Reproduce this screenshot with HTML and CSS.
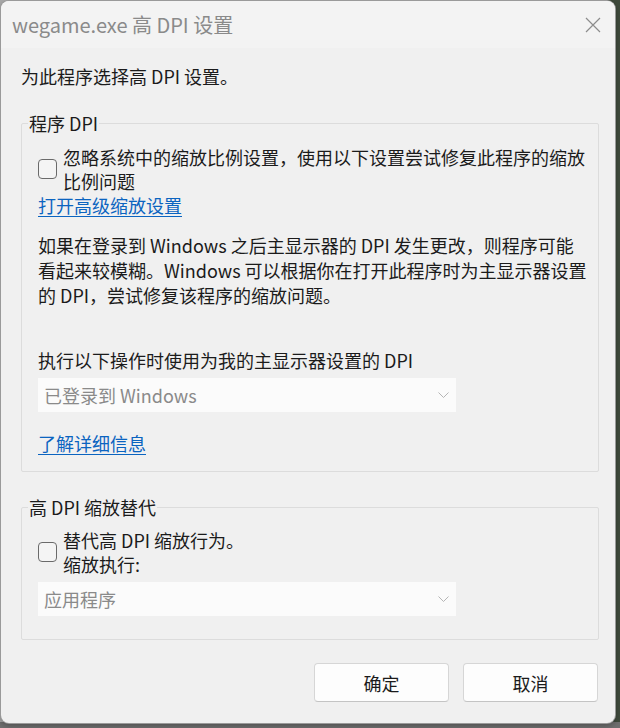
FILE: index.html
```html
<!DOCTYPE html>
<html lang="zh-CN">
<head>
<meta charset="utf-8">
<title>wegame.exe 高 DPI 设置</title>
<link rel="stylesheet" href="styles.css">
</head>
<body>
<div class="window">
  <div class="titlebar">
    <span class="title">wegame.exe 高 DPI 设置</span>
    <svg class="close" width="16" height="16" viewBox="0 0 16 16"><path d="M1 1L15 15M15 1L1 15" stroke="#8c8c8c" stroke-width="1.2" fill="none"/></svg>
  </div>
  <div class="content">
    <p class="intro">为此程序选择高 DPI 设置。</p>
    <fieldset class="group group-dpi">
      <legend>程序 DPI</legend>
      <div class="check-row">
        <span class="checkbox"></span>
        <span class="check-label">忽略系统中的缩放比例设置，使用以下设置尝试修复此程序的缩放<br>比例问题</span>
      </div>
      <a class="link">打开高级缩放设置</a>
      <p class="desc">如果在登录到 Windows 之后主显示器的 DPI 发生更改，则程序可能<br>看起来较模糊。Windows 可以根据你在打开此程序时为主显示器设置<br>的 DPI，尝试修复该程序的缩放问题。</p>
      <p class="label">执行以下操作时使用为我的主显示器设置的 DPI</p>
      <div class="select">
        <span>已登录到 Windows</span>
        <svg class="chev" width="11" height="6" viewBox="0 0 11 6"><path d="M0.5 0.5L5.5 5.5L10.5 0.5" stroke="#b5b5b5" stroke-width="1" fill="none"/></svg>
      </div>
      <a class="link link-more">了解详细信息</a>
    </fieldset>
    <fieldset class="group group-override">
      <legend>高 DPI 缩放替代</legend>
      <div class="check-row">
        <span class="checkbox"></span>
        <span class="check-label">替代高 DPI 缩放行为。<br>缩放执行:</span>
      </div>
      <div class="select">
        <span>应用程序</span>
        <svg class="chev" width="11" height="6" viewBox="0 0 11 6"><path d="M0.5 0.5L5.5 5.5L10.5 0.5" stroke="#b5b5b5" stroke-width="1" fill="none"/></svg>
      </div>
    </fieldset>
    <div class="buttons">
      <button class="btn">确定</button>
      <button class="btn">取消</button>
    </div>
  </div>
</div>
</body>
</html>
```
FILE: styles.css
```css
html, body {
  margin: 0;
  padding: 0;
}
body {
  width: 620px;
  height: 728px;
  overflow: hidden;
  background:
    linear-gradient(0deg, #6f6f6f 0, #6f6f6f 6px, transparent 6px),
    linear-gradient(90deg, #a9a9a9 0, #a9a9a9 600px, #3f4a3c 600px);
  font-family: "Noto Sans CJK SC", "Noto Sans", sans-serif;
  font-size: 18px;
  color: #1b1b1b;
}
.window {
  margin: 1px 0 0 1px;
  width: 614px;
  height: 722px;
  background: #f0f0f0;
  border-radius: 8px;
  box-shadow: 0 0 0 1px #9a9a9a, 0 2px 6px rgba(0,0,0,0.35);
  display: flex;
  flex-direction: column;
  overflow: hidden;
}
.titlebar {
  height: 47px;
  flex: none;
  display: flex;
  align-items: center;
  justify-content: space-between;
  padding: 0 14px 0 11px;
  background: #f3f3f3;
}
.title {
  color: #8a8a8a;
  font-size: 20px;
  line-height: 24px;
  white-space: nowrap;
}
.close {
  display: block;
}
.content {
  padding: 0 16px 0 20px;
  display: flex;
  flex-direction: column;
}
.intro {
  margin: 16px 0 0;
  line-height: 24px;
}
.group {
  margin: 23px 0 0;
  border: 1px solid #dcdcdc;
  border-radius: 2px;
  padding: 0 16px 16px 16px;
  min-width: 0;
  display: flex;
  flex-direction: column;
  align-items: flex-start;
}
.group legend {
  padding: 0 1px;
  margin-left: -10px;
  line-height: 24px;
}
.check-row {
  display: flex;
  align-items: center;
  gap: 6px;
  margin-top: 10px;
}
.checkbox {
  width: 17px;
  height: 18px;
  flex: none;
  border: 1px solid #6a6a6a;
  border-radius: 4px;
  background: #f4f4f4;
}
.check-label {
  line-height: 24px;
  white-space: nowrap;
}
.link {
  color: #0b64c0;
  text-decoration: underline;
  text-underline-offset: 3px;
  line-height: 24px;
}
.desc {
  margin: 16px 0 0;
  line-height: 25px;
  white-space: nowrap;
}
.label {
  margin: 40px 0 0;
  line-height: 24px;
  white-space: nowrap;
}
.select {
  margin-top: 6px;
  width: 418px;
  height: 34px;
  box-sizing: border-box;
  background: #fbfbfb;
  display: flex;
  align-items: center;
  justify-content: space-between;
  padding: 0 7px 0 6px;
  color: #8a8a8a;
}
.link-more {
  margin-top: 19px;
}
.group-override {
  padding-bottom: 23px;
}
.group-override .check-row {
  margin-top: 9px;
}
.buttons {
  margin-top: 23px;
  display: flex;
  justify-content: flex-end;
  gap: 14px;
  padding-right: 1px;
}
.btn {
  width: 135px;
  height: 39px;
  background: #fdfdfd;
  border: 1px solid #d6d6d6;
  border-bottom-color: #c4c4c4;
  border-radius: 4px;
  font-family: "Noto Sans CJK SC", "Noto Sans", sans-serif;
  font-size: 18px;
  color: #1b1b1b;
  padding: 0;
}
```
